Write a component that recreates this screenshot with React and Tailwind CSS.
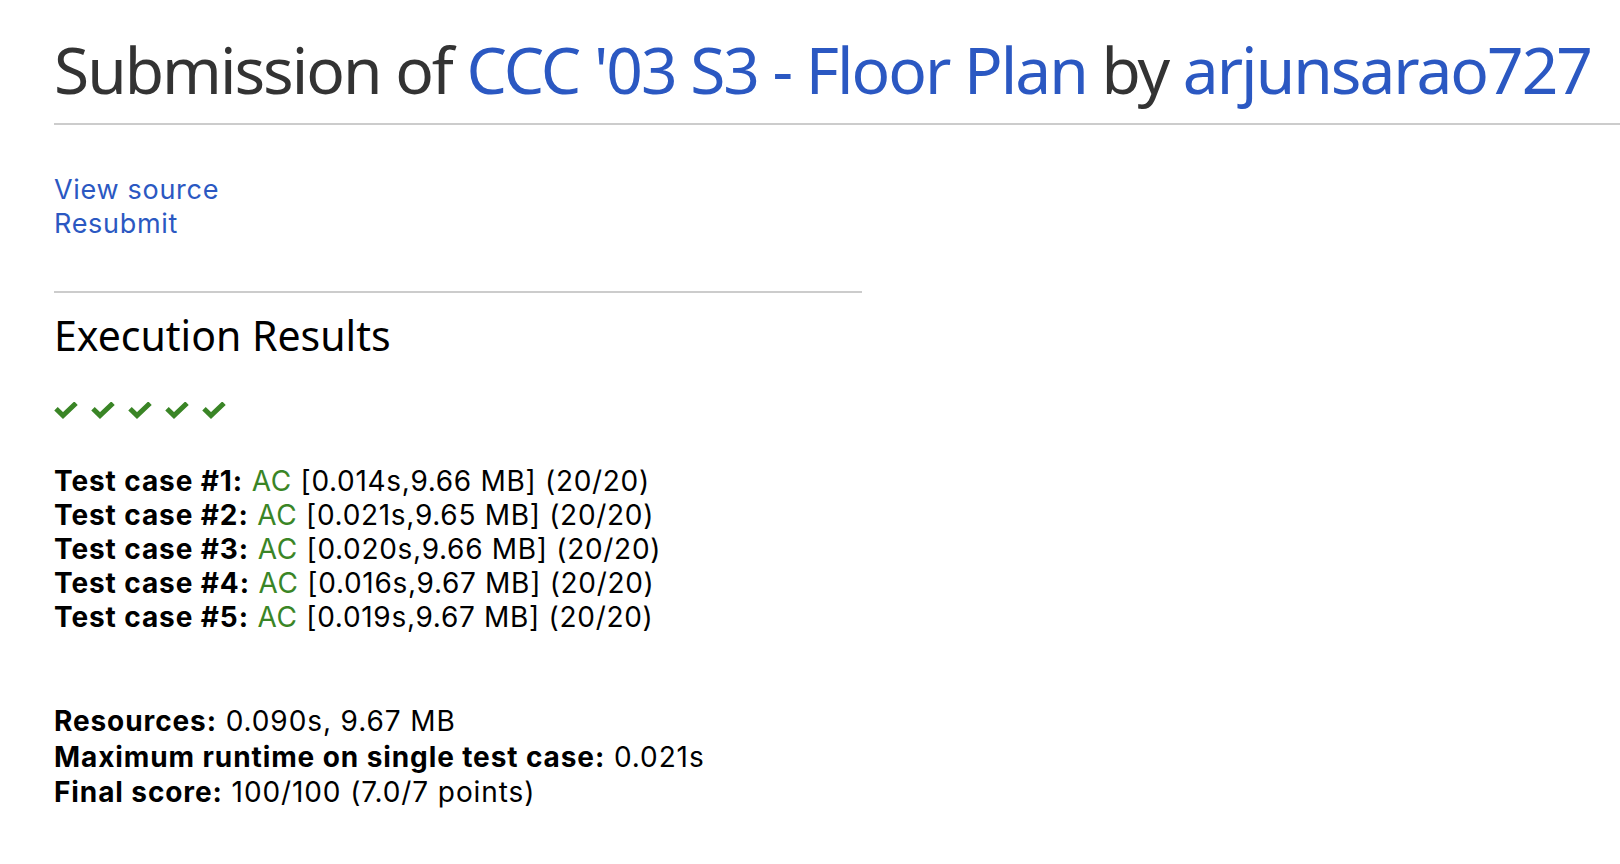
const cases = [
  { n: 1, time: "0.014s", mem: "9.66 MB" },
  { n: 2, time: "0.021s", mem: "9.65 MB" },
  { n: 3, time: "0.020s", mem: "9.66 MB" },
  { n: 4, time: "0.016s", mem: "9.67 MB" },
  { n: 5, time: "0.019s", mem: "9.67 MB" },
];

function Check() {
  return (
    <svg viewBox="0 0 24 18" className="w-[24px] h-[18px]">
      <polyline
        points="2,6.8 9,13.6 22,1.2"
        fill="none"
        stroke="#3a8526"
        strokeWidth="5"
        strokeLinejoin="miter"
      />
    </svg>
  );
}

export default function App() {
  return (
    <div className="min-h-screen bg-white pl-[54px] text-black font-['Noto_Sans','Liberation_Sans',sans-serif]">
      <h2 className="pt-[38px] text-[64px] leading-[64px] tracking-[-2px] whitespace-nowrap text-[#333]">
        Submission of <a className="text-[#2b58c2]">CCC '03 S3 - Floor Plan</a> by{" "}
        <a className="text-[#2b58c2]">arjunsarao727</a>
      </h2>
      <hr className="mt-[21px] border-t-2 border-[#ccc]" />

      <div className="mt-[48px] font-['Inter','Noto_Sans',sans-serif] text-[27px] leading-[34px] tracking-[0.7px] text-[#2b58c2]">
        <div>View source</div>
        <div>Resubmit</div>
      </div>

      <hr className="mt-[50px] w-[808px] border-t-2 border-[#ccc]" />

      <h3 className="mt-[20px] text-[41px] leading-[44px]">Execution Results</h3>

      <div className="mt-[45px] flex gap-[13px]">
        {cases.map((c) => (
          <Check key={c.n} />
        ))}
      </div>

      <div className="mt-[44px] font-['Inter','Noto_Sans',sans-serif] text-[28px] leading-[34px] tracking-[0.7px]">
        {cases.map((c) => (
          <div key={c.n}>
            <b className="tracking-[0.9px]">Test case #{c.n}:</b> <span className="text-[#3a8526]">AC</span> [{c.time},{c.mem}] (20/20)
          </div>
        ))}
      </div>

      <div className="mt-[70px] font-['Inter','Noto_Sans',sans-serif] text-[28px] leading-[35.5px] tracking-[0.9px]">
        <div>
          <b>Resources:</b> 0.090s, 9.67 MB
        </div>
        <div>
          <b>Maximum runtime on single test case:</b> 0.021s
        </div>
        <div>
          <b>Final score:</b> 100/100 (7.0/7 points)
        </div>
      </div>
    </div>
  );
}
